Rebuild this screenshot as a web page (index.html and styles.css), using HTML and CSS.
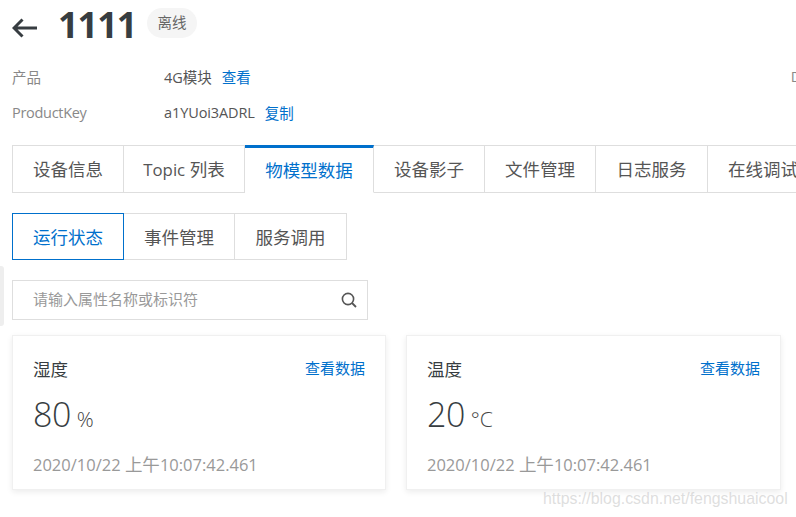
FILE: index.html
```html
<!DOCTYPE html>
<html lang="zh-CN">
<head>
<meta charset="utf-8">
<title>1111</title>
<link rel="stylesheet" href="styles.css">
</head>
<body>
<div class="sliver"></div>
<main class="page">
  <header class="head">
    <svg class="back" viewBox="0 0 26 20" width="26" height="20"><path d="M25 10H2M10.500 1.500 2 10l8.500 8.500" fill="none" stroke="#373d41" stroke-width="3"/></svg>
    <h1 class="title">1111</h1>
    <span class="badge">离线</span>
  </header>
  <section class="meta">
    <div class="meta-row meta-row-first">
      <span class="meta-key">产品</span>
      <span class="meta-val">4G模块</span><a class="link meta-link">查看</a>
      <span class="meta-clip">DeviceName</span>
    </div>
    <div class="meta-row">
      <span class="meta-key meta-key-latin">ProductKey</span>
      <span class="meta-val meta-val-latin">a1YUoi3ADRL</span><a class="link meta-link">复制</a>
    </div>
  </section>
  <nav class="tabs">
    <a class="tab">设备信息</a>
    <a class="tab"><span class="tab-latin">Topic</span> 列表</a>
    <a class="tab tab-on">物模型数据</a>
    <a class="tab">设备影子</a>
    <a class="tab">文件管理</a>
    <a class="tab">日志服务</a>
    <a class="tab">在线调试</a>
  </nav>
  <nav class="subtabs">
    <a class="sub sub-on">运行状态</a>
    <a class="sub">事件管理</a>
    <a class="sub">服务调用</a>
  </nav>
  <div class="search">
    <span class="placeholder">请输入属性名称或标识符</span>
    <svg class="search-icon" viewBox="0 0 16 16" width="16" height="16"><circle cx="7" cy="7" r="5.600" fill="none" stroke="#555" stroke-width="1.600"/><path d="m11 11 4 4" fill="none" stroke="#555" stroke-width="1.800"/></svg>
  </div>
  <section class="cards">
    <article class="card">
      <div class="card-top"><span class="card-name">湿度</span><a class="link card-link">查看数据</a></div>
      <div class="reading"><span class="num">80</span><span class="unit">%</span></div>
      <div class="time">2020/10/22 <span class="time-cjk">上午</span>10:07:42.461</div>
    </article>
    <article class="card">
      <div class="card-top"><span class="card-name">温度</span><a class="link card-link">查看数据</a></div>
      <div class="reading"><span class="num">20</span><span class="unit">°C</span></div>
      <div class="time">2020/10/22 <span class="time-cjk">上午</span>10:07:42.461</div>
    </article>
  </section>
</main>
<div class="watermark">https://blog.csdn.net/fengshuaicool</div>
</body>
</html>
```
FILE: styles.css
```css
* { box-sizing: border-box; }
html, body { margin: 0; height: 517px; overflow: hidden; background: #fff; }
body { font-family: "Open Sans", "Noto Sans CJK SC", sans-serif; color: #555; position: relative; }
.page { width: 796px; padding: 0 0 0 12px; }
.head { display: flex; align-items: center; height: 50px; }
.back { flex: none; margin-top: 6px; }
.title { margin: 0 0 0 20px; font: 700 36px/50px "Open Sans", "Noto Sans CJK SC", sans-serif; color: #373d41; width: 77px; letter-spacing: -1px; }
.badge { margin: -4px 0 0 12px; width: 50px; height: 30px; border-radius: 15px; background: #f5f5f5; font-size: 14.500px; line-height: 29px; text-align: center; color: #666; }
.meta { padding-top: 10px; height: 95px; }
.meta-row { display: flex; height: 35px; align-items: center; font-size: 14.500px; white-space: nowrap; }
.meta-row-first { padding-bottom: 3px; }
.meta-key { width: 152px; color: #888; flex: none; }
.meta-key-latin { letter-spacing: -0.300px; }
.meta-val { color: #555; }
.meta-val-latin { letter-spacing: -0.100px; }
.meta-link { margin-left: 10px; }
.meta-clip { margin-left: 540px; color: #888; }
.link { color: #0070cc; }
.tabs { display: flex; height: 48px; width: 800px; }
.tab { flex: none; height: 48px; padding: 0 20px; border: 1px solid #dedede; border-left-width: 0; font-size: 17.500px; line-height: 47px; color: #555; white-space: nowrap; text-align: center; }
.tab:first-child { border-left-width: 1px; width: 112px; }
.tab:nth-child(2) { width: 121px; padding: 0; }
.tab:nth-child(3) { width: 129px; padding: 0; }
.tab:nth-child(4), .tab:nth-child(5) { width: 111px; padding: 0; }
.tab:nth-child(6) { width: 112px; padding: 0; }
.tab:nth-child(7) { width: 111px; padding: 0; }
.tab-latin { font-size: 16.800px; }
.tab-on { border-top: 3px solid #0070cc; border-bottom-color: #fff; color: #0070cc; line-height: 45px; }
.subtabs { display: flex; margin-top: 20px; height: 47px; }
.sub { width: 111px; height: 47px; border: 1px solid #dedede; border-left-width: 0; font-size: 17.500px; line-height: 47px; text-align: center; color: #555; }
.sub:last-child { width: 112px; }
.sub-on { width: 112px; border: 1px solid #0070cc; color: #0070cc; }
.search { display: flex; align-items: center; justify-content: space-between; width: 356px; height: 40px; margin-top: 20px; padding: 0 10px 0 20px; border: 1px solid #dedede; }
.placeholder { font-size: 15px; line-height: 36px; height: 38px; color: #999; }
.search-icon { flex: none; }
.cards { display: flex; gap: 20px; margin-top: 15px; }
.card { width: 374px; height: 155px; padding: 0 20px; background: #fff; border: 1px solid #f0f0f0; box-shadow: 0 2px 6px rgba(0, 0, 0, .08); }
.card:last-child { width: 375px; }
.card-top { display: flex; justify-content: space-between; padding-top: 21px; height: 53px; }
.card-name { font-size: 17.500px; line-height: 24px; color: #373d41; }
.card-link { font-size: 15px; line-height: 22px; }
.reading { display: flex; align-items: baseline; height: 52px; color: #373d41; }
.num { font-size: 34px; line-height: 50px; font-weight: 300; letter-spacing: -0.500px; }
.unit { font-size: 21px; font-weight: 300; margin-left: 6px; color: #444; }
.time { margin-top: 11px; font-size: 16.500px; line-height: 24px; color: #999; white-space: nowrap; }
.time-cjk { font-size: 17.500px; }
.sliver { position: absolute; left: 0; top: 266px; width: 4px; height: 60px; background: #eee; border-radius: 0 3px 3px 0; }
.watermark { position: absolute; left: 543px; top: 489px; font: 15.900px/20px "Liberation Sans", sans-serif; color: rgba(190, 190, 190, .5); white-space: nowrap; }
```
